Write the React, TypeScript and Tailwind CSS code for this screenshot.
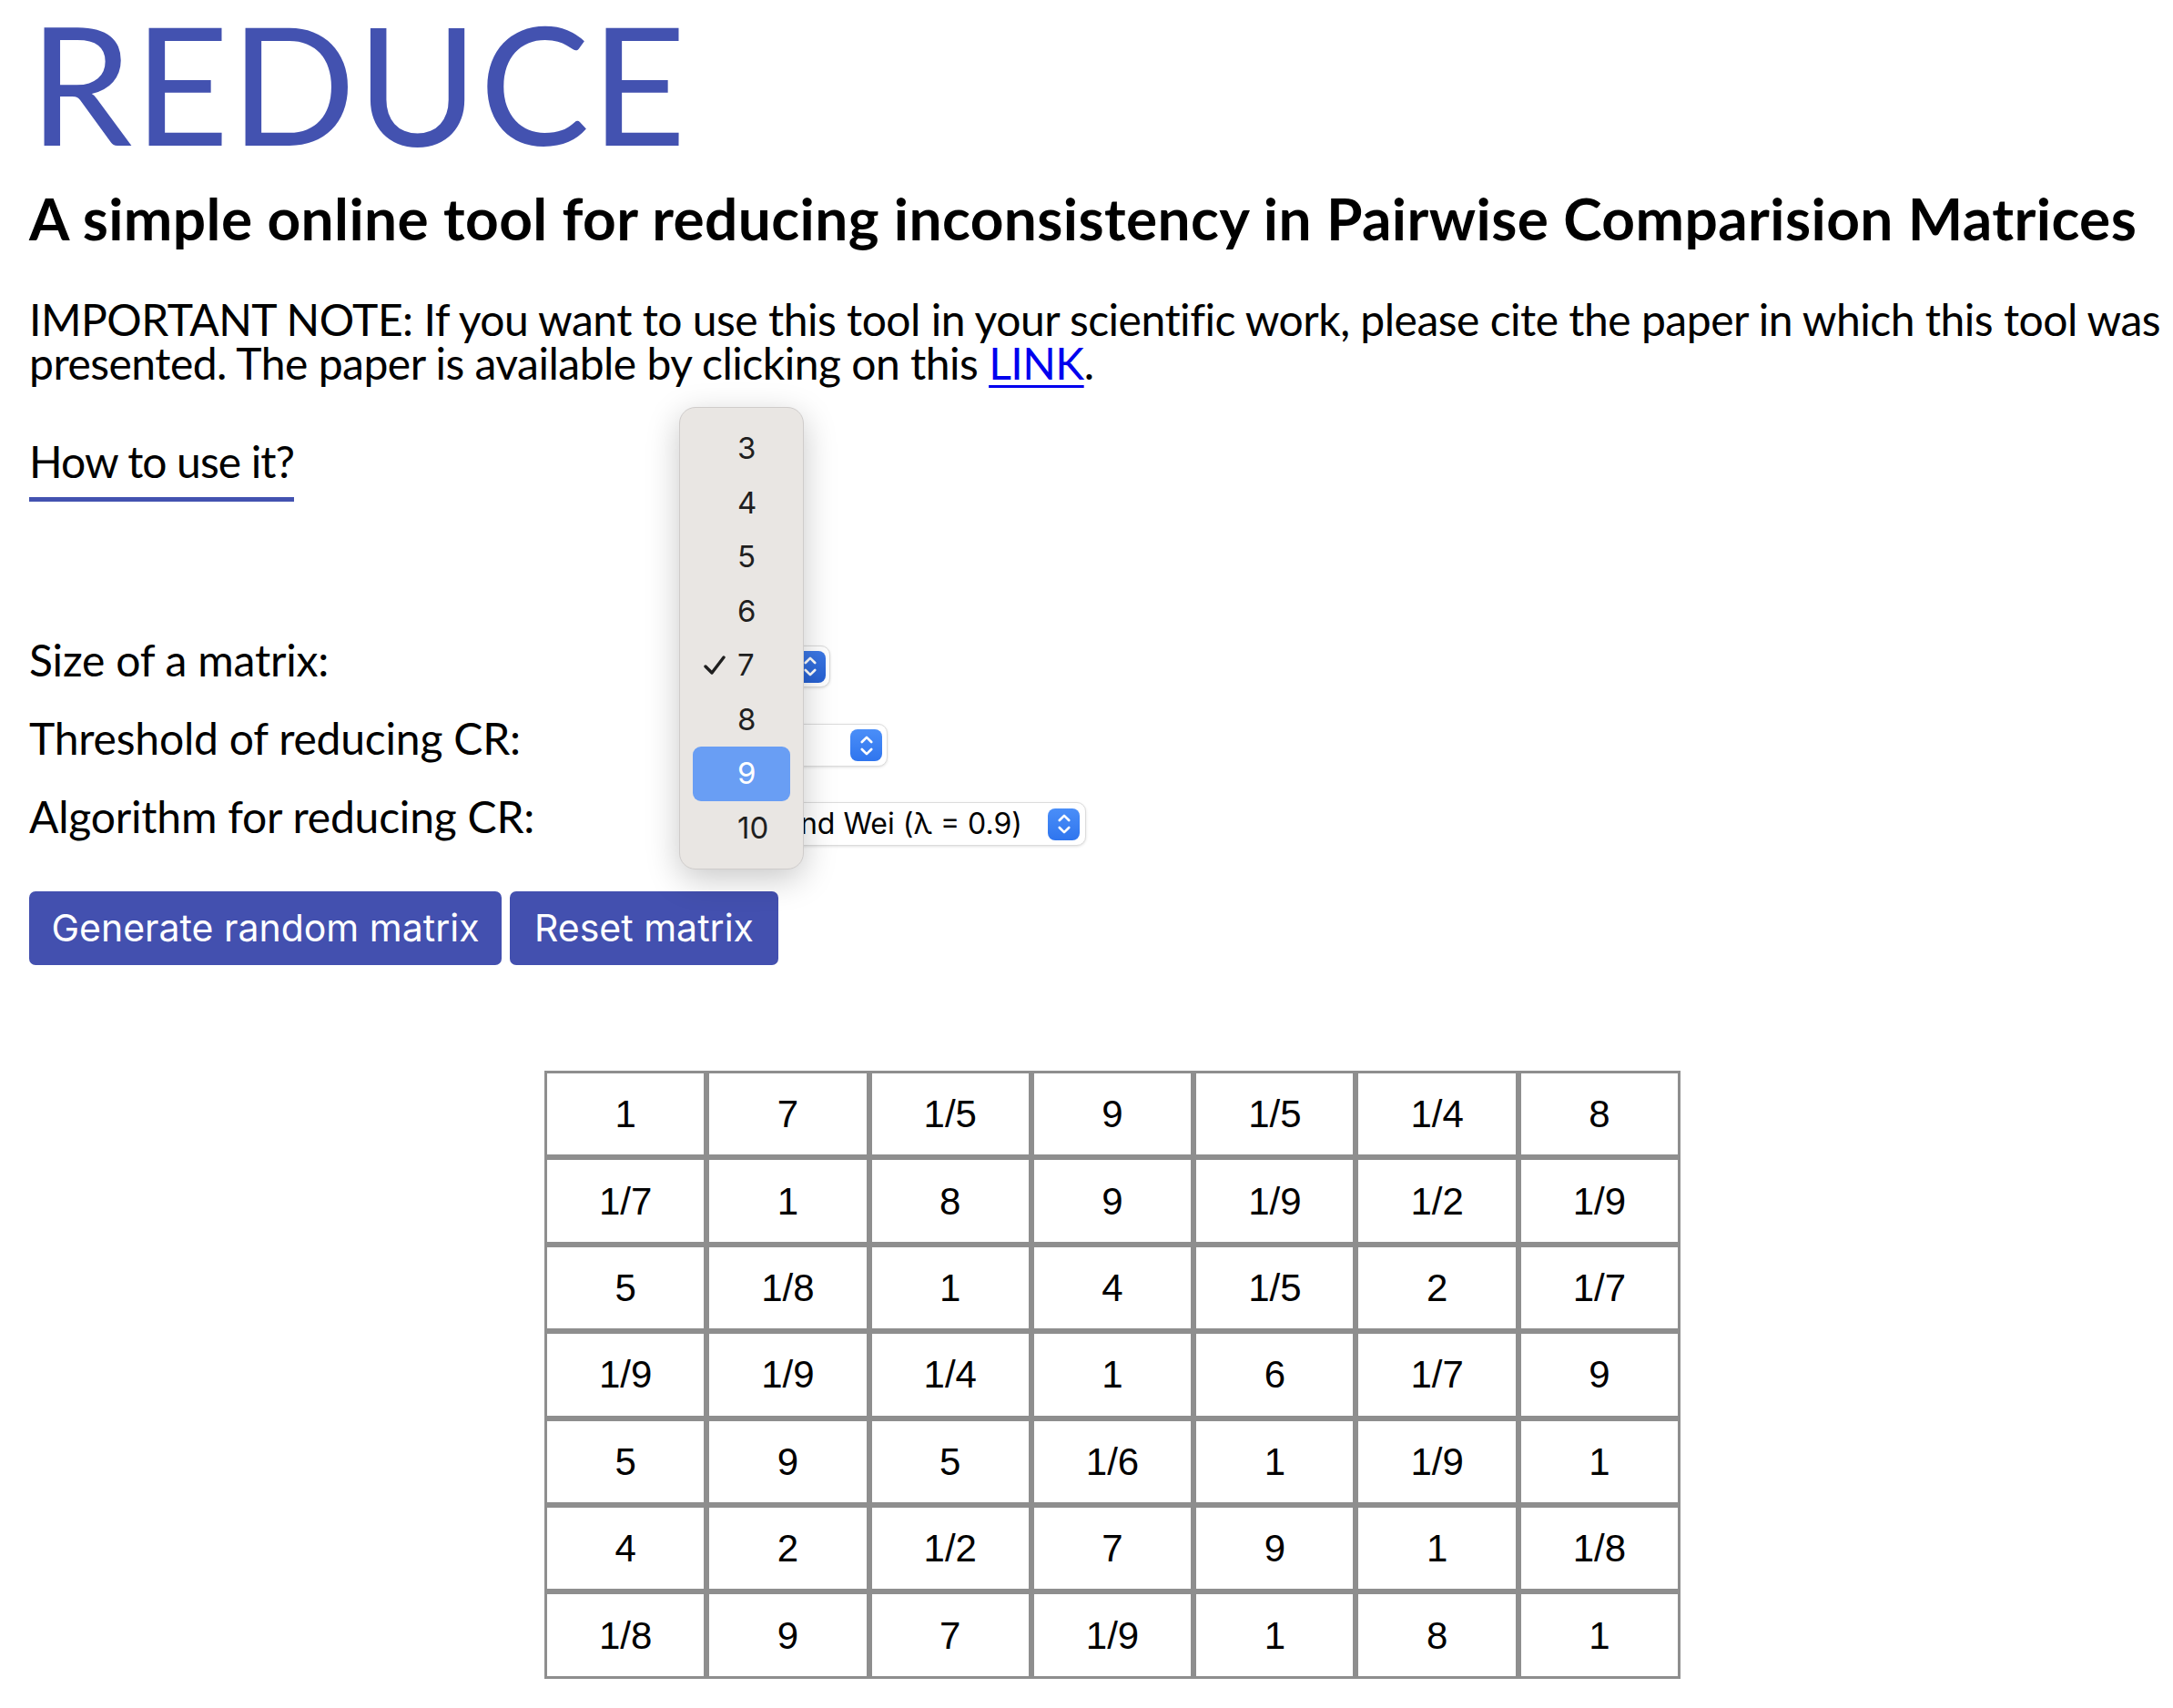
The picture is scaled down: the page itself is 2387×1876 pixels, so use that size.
import React from "react";

const matrix: string[][] = [
  ["1", "7", "1/5", "9", "1/5", "1/4", "8"],
  ["1/7", "1", "8", "9", "1/9", "1/2", "1/9"],
  ["5", "1/8", "1", "4", "1/5", "2", "1/7"],
  ["1/9", "1/9", "1/4", "1", "6", "1/7", "9"],
  ["5", "9", "5", "1/6", "1", "1/9", "1"],
  ["4", "2", "1/2", "7", "9", "1", "1/8"],
  ["1/8", "9", "7", "1/9", "1", "8", "1"],
];

const sizes = ["3", "4", "5", "6", "7", "8", "9", "10"];

function Stepper({ dark }: { dark?: boolean }) {
  return (
    <div
      className={
        dark
          ? "w-[35px] h-[35px] shrink-0 rounded-[8px] bg-gradient-to-b from-[#3c78e6] to-[#2660d2] flex items-center justify-center"
          : "w-[35px] h-[35px] shrink-0 rounded-[8px] bg-gradient-to-b from-[#4a8ef8] to-[#2f75ee] flex items-center justify-center"
      }
    >
      <svg width="14" height="24" viewBox="0 0 14 24" fill="none">
        <path d="M1.8 8 L7 2.8 L12.2 8" stroke="white" strokeWidth="2.6" strokeLinecap="round" strokeLinejoin="round" />
        <path d="M1.8 16 L7 21.2 L12.2 16" stroke="white" strokeWidth="2.6" strokeLinecap="round" strokeLinejoin="round" />
      </svg>
    </div>
  );
}

export default function App() {
  return (
    <div className="relative min-h-[1876px] bg-white pl-8 font-['Lato',sans-serif] text-black">
      {/* Title */}
      <h1 className="text-[181px] leading-none tracking-[1.5px] text-[#4352b0] font-normal">REDUCE</h1>
      <h2 className="mt-[27px] text-[64px] leading-none tracking-[0.4px] font-bold whitespace-nowrap">
        A simple online tool for reducing inconsistency in Pairwise Comparision Matrices
      </h2>

      <p className="mt-[55px] text-[48px] leading-[48px] tracking-[-0.5px] whitespace-nowrap">
        IMPORTANT NOTE: If you want to use this tool in your scientific work, please cite the paper in which this tool was
        <br />
        presented. The paper is available by clicking on this{" "}
        <a href="#" className="text-[#0000ee] underline underline-offset-[6px] decoration-[3px]">
          LINK
        </a>
        .
      </p>

      <div className="mt-[60px]">
        <span className="inline-block text-[48px] leading-[48px] tracking-[-0.9px] pb-[15px] border-b-[5px] border-[#4352b0]">
          How to use it?
        </span>
      </div>

      {/* Settings */}
      <div className="mt-[150px] flex flex-col">
        <div className="flex h-[86px]">
          <div className="w-[738px] text-[48px] leading-[48px] tracking-[-0.2px]">Size of a matrix:</div>
          <div className="mt-[8px] w-[142px] h-[46px] rounded-[10px] bg-white border border-[#dcdcdc] shadow-[0_1px_3px_rgba(0,0,0,0.12)] flex items-center justify-between pl-[38px] pr-[4px] font-['Inter',sans-serif] text-[32px]">
            <span>7</span>
            <Stepper dark />
          </div>
        </div>
        <div className="flex h-[86px]">
          <div className="w-[738px] text-[48px] leading-[48px] tracking-[-0.2px]">Threshold of reducing CR:</div>
          <div className="mt-[8px] w-[205px] h-[47px] rounded-[10px] bg-white border border-[#dcdcdc] shadow-[0_1px_3px_rgba(0,0,0,0.12)] flex items-center justify-between pl-[38px] pr-[5px] font-['Inter',sans-serif] text-[32px]">
            <span>0.1</span>
            <Stepper />
          </div>
        </div>
        <div className="flex h-[86px]">
          <div className="w-[738px] text-[48px] leading-[48px] tracking-[-0.2px]">Algorithm for reducing CR:</div>
          <div className="mt-[8px] w-[423px] h-[48px] rounded-[10px] bg-white border border-[#dcdcdc] shadow-[0_1px_3px_rgba(0,0,0,0.12)] flex items-center justify-end gap-[28px] pr-[6px] font-['Inter',sans-serif] text-[32px] overflow-hidden whitespace-nowrap">
            <span>Xu and Wei (λ = 0.9)</span>
            <Stepper />
          </div>
        </div>
      </div>

      {/* Buttons */}
      <div className="mt-[20px] flex gap-[9px]">
        <button className="w-[519px] h-[81px] rounded-[7px] bg-[#4350af] text-white font-['Inter',sans-serif] text-[41px]">
          Generate random matrix
        </button>
        <button className="w-[295px] h-[81px] rounded-[7px] bg-[#4350af] text-white font-['Inter',sans-serif] text-[41px]">
          Reset matrix
        </button>
      </div>

      {/* Matrix */}
      <div className="mt-[116px] ml-[566px] grid grid-cols-[repeat(7,178.3px)] w-max">
        {matrix.flat().map((v, i) => (
          <div
            key={i}
            className="h-[95.4px] border-[3px] border-[#8e8e8e] flex items-center justify-center font-['Liberation_Sans',Arial,sans-serif] text-[42px]"
          >
            {v}
          </div>
        ))}
      </div>

      {/* Open select popup */}
      <div className="absolute left-[746px] top-[447px] w-[137px] py-[15px] rounded-[18px] bg-[#e9e6e3] border border-[#cfcccb] shadow-[0_10px_36px_rgba(0,0,0,0.22)] font-['Inter',sans-serif] text-[33px] text-[#1f1f1f]">
        {sizes.map((s) => (
          <div key={s} className="relative h-[59.5px] flex items-center">
            {s === "9" && (
              <div className="absolute left-[14px] right-[14px] top-0 bottom-0 rounded-[9px] bg-[#699ef4]" />
            )}
            {s === "7" && (
              <svg className="absolute left-[26px]" width="24" height="22" viewBox="0 0 24 22" fill="none">
                <path d="M2 12 L9 19 L22 2" stroke="#1f1f1f" strokeWidth="3.4" strokeLinecap="round" strokeLinejoin="round" />
              </svg>
            )}
            <span className={s === "9" ? "relative ml-[63px] text-white" : "relative ml-[63px]"}>{s}</span>
          </div>
        ))}
      </div>
    </div>
  );
}
